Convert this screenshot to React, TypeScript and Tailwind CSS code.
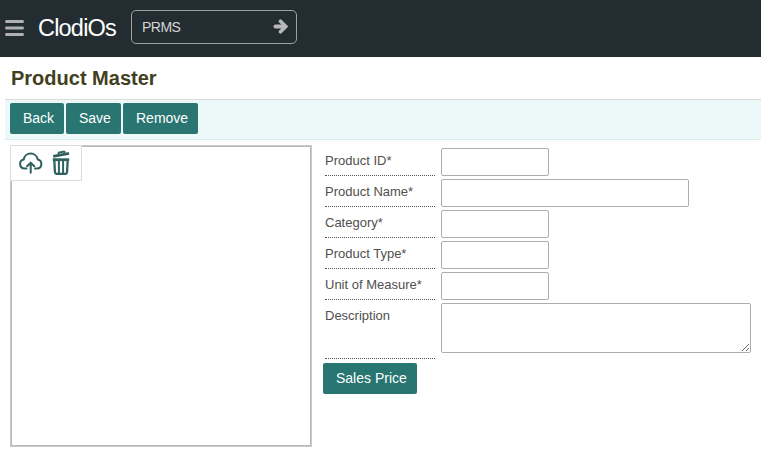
import React from "react";

const fields = [
  { label: "Product ID*", width: "w-[108px]" },
  { label: "Product Name*", width: "w-[248px]" },
  { label: "Category*", width: "w-[108px]" },
  { label: "Product Type*", width: "w-[108px]" },
  { label: "Unit of Measure*", width: "w-[108px]" },
];

function Button({ children, className }: { children: React.ReactNode; className: string }) {
  return (
    <button
      className={`h-[31px] whitespace-nowrap rounded-[2px] bg-[#287571] pl-[13px] text-left text-[14px] leading-[31px] text-white ${className}`}
    >
      {children}
    </button>
  );
}

function MenuIcon() {
  return (
    <svg width="19" height="16" viewBox="0 0 19 16" stroke="#b0b0b0" strokeWidth="3" strokeLinecap="round">
      <path d="M1.5 1.500h16M1.5 8h16M1.5 14.500h16" />
    </svg>
  );
}

function ArrowIcon() {
  return (
    <svg width="16" height="16" viewBox="0 0 16 16" fill="none" stroke="#b8b8b8" strokeWidth="4" strokeLinecap="round">
      <path d="M2.500 7.500H12" />
      <path d="M7.500 2.200 12.800 7.500l-5.300 5.300" strokeWidth="3.600" />
    </svg>
  );
}

function UploadIcon() {
  return (
    <svg width="26" height="22" viewBox="0 0 26 22" fill="none" stroke="#2f625f" strokeWidth="2" strokeLinecap="round" strokeLinejoin="round">
      <path d="M8.500 16.500H6.500a4.500 4.500 0 0 1-.8-8.900 7.100 7.100 0 0 1 14-.2 4.600 4.600 0 0 1-.8 9.100H17" />
      <path d="M12.700 20.700V11M9.100 14.200l3.600-3.600 3.600 3.600" />
    </svg>
  );
}

function TrashIcon() {
  return (
    <svg width="18" height="25" viewBox="0 0 18 25" fill="none" stroke="#2f625f">
      <path d="M1.200 6.300 17 3.300" strokeWidth="2.700" />
      <path d="M6 3.900 7 2.600 12 1.600 13.200 2.500" strokeWidth="2" />
      <path d="M.8 9.700h16.400" strokeWidth="2.800" />
      <path d="M2.300 9.500l.6 12.300q.1 2.100 2 2.100h8.200q1.900 0 2-2.100l.6-12.300" strokeWidth="2.300" />
      <path d="M6.900 10v13M11.100 10v13" strokeWidth="2" />
    </svg>
  );
}

export default function App() {
  return (
    <div className="h-[455px] w-[761px] overflow-hidden bg-white font-['Liberation_Sans',Arial,sans-serif]">
      <header className="flex h-[57px] items-start bg-[#232d31] pl-[5px]">
        <div className="pt-5"><MenuIcon /></div>
        <div className="ml-[14px] w-[93px] pt-[13px] text-[23.500px] leading-[30px] tracking-[-0.8px] text-white">ClodiOs</div>
        <div className="mt-[10px] flex h-[34px] w-[166px] items-center justify-between rounded-[5px] border border-[#a0a0a0] pl-[10px] pr-[7px]">
          <span className="text-[14px] tracking-[-0.5px] text-[#d4d4d4]">PRMS</span>
          <ArrowIcon />
        </div>
      </header>
      <h1 className="h-[42px] pl-[11px] pt-[6px] text-[20px] font-bold leading-[30px] text-[#42401f]">Product Master</h1>
      <div className="ml-[5px] flex h-[41px] gap-[2px] border-y border-t-[#d9dedd] border-b-[#d3efed] bg-[#edf9f9] pl-[5px] pt-[3px]">
        <Button className="w-[54px]">Back</Button>
        <Button className="w-[55px]">Save</Button>
        <Button className="w-[75px]">Remove</Button>
      </div>
      <main className="flex pl-[10px] pt-[5px]">
        <div className="relative h-[302px] w-[302px] border border-[#cacaca]">
          <div className="h-full border border-[#b8b8b8]" />
          <div className="absolute -left-px -top-px flex h-[36px] w-[72px] border border-[#dcdcdc] bg-white pl-[7px]">
            <div className="w-[34px] pt-[6px]"><UploadIcon /></div>
            <div className="pt-[4px]"><TrashIcon /></div>
          </div>
        </div>
        <form className="ml-[13px] pt-[3px]">
          {fields.map((field) => (
            <div key={field.label} className="flex h-[31px]">
              <label className="mr-[6px] h-[28px] w-[110px] whitespace-nowrap border-b border-dotted border-[#555] text-[13px] leading-[25px] text-[#505050]">
                {field.label}
              </label>
              <input className={`h-[28px] rounded-[2px] border border-[#adadad] ${field.width}`} />
            </div>
          ))}
          <div className="flex h-[60px]">
            <label className="mr-[6px] h-[56px] w-[110px] border-b border-dotted border-[#555] text-[13px] leading-[25px] text-[#505050]">
              Description
            </label>
            <textarea className="h-[50px] w-[310px] rounded-[2px] border border-[#adadad]" />
          </div>
          <Button className="-ml-[2px] block w-[94px]">Sales Price</Button>
        </form>
      </main>
    </div>
  );
}
